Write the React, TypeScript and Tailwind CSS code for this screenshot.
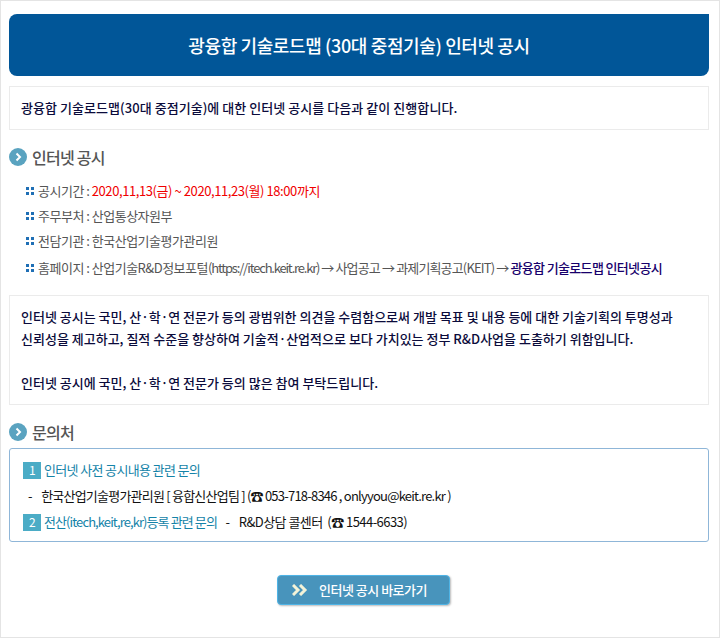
const font = "font-['Noto_Sans_CJK_KR','Noto_Sans',sans-serif]";

function SectionTitle({ children }: { children: string }) {
  return (
    <h3 className="flex items-center gap-[5px] h-[24px]">
      <span className="w-[18px] h-[18px] rounded-full bg-[#5aa3c0] flex items-center justify-center">
        <svg width="10" height="10" viewBox="0 0 10 10" fill="none">
          <path d="M3.5 1.5 L7 5 L3.5 8.5" stroke="#fff" strokeWidth="2" />
        </svg>
      </span>
      <span className="text-[16px] font-medium text-[#555] tracking-[-0.75px]">{children}</span>
    </h3>
  );
}

function Bullet() {
  return (
    <span className="grid grid-cols-2 gap-[2px] w-[8px] shrink-0">
      <i className="w-[3px] h-[3px] bg-[#1f6fb5]" />
      <i className="w-[3px] h-[3px] bg-[#1f6fb5]" />
      <i className="w-[3px] h-[3px] bg-[#1f6fb5]" />
      <i className="w-[3px] h-[3px] bg-[#1f6fb5]" />
    </span>
  );
}

function InfoRow({ className, children }: { className: string; children: React.ReactNode }) {
  return (
    <li className={`flex items-center gap-[4px] ${className}`}>
      <Bullet />
      <span className="whitespace-nowrap">{children}</span>
    </li>
  );
}

function Num({ n }: { n: number }) {
  return (
    <span className="w-[18px] h-[17px] bg-[#4bacc6] text-white text-[12px] leading-[16px] text-center mr-[3px] shrink-0">
      {n}
    </span>
  );
}

export default function App() {
  return (
    <div className={`${font} w-[720px] h-[638px] bg-white border-[1px] border-[#e4e4e4] pt-[13px] pl-[8px] pr-[10px] overflow-hidden`}>
      <h1 className="h-[62px] bg-[#015698] rounded-tl-[8px] rounded-b-[8px] text-white text-[18px] font-medium tracking-[-0.38px] flex items-center justify-center">
        광융합 기술로드맵 (30대 중점기술) 인터넷 공시
      </h1>

      <p className="mt-[10px] h-[44px] border border-[#ebebeb] pl-[11px] flex items-center text-[13px] font-medium text-[#0b0b3b] tracking-[0.05px]">
        광융합 기술로드맵(30대 중점기술)에 대한 인터넷 공시를 다음과 같이 진행합니다.
      </p>

      <div className="mt-[15px]">
        <SectionTitle>인터넷 공시</SectionTitle>
      </div>

      <ul className="mt-[9px] pl-[17px] text-[13px] leading-[20px] text-[#555] tracking-[-0.5px]">
        <InfoRow className="h-[25px]">
          공시기간 : <span className="text-[#f00000] tracking-[-0.42px]">2020,11,13(금) ~ 2020,11,23(월) 18:00까지</span>
        </InfoRow>
        <InfoRow className="h-[25px]">주무부처 : 산업통상자원부</InfoRow>
        <InfoRow className="h-[25px]">전담기관 : 한국산업기술평가관리원</InfoRow>
        <InfoRow className="h-[25px] mt-[2px]">
          홈페이지 : 산업기술R&amp;D정보포털<span className="tracking-[-1.2px]">(https://itech.keit.re.kr)</span>
          <span className="tracking-[-0.85px]"> → 사업공고 → 과제기획공고(KEIT) → </span>
          <span className="text-[#17006b] font-medium tracking-[-0.65px]">광융합 기술로드맵 인터넷공시</span>
        </InfoRow>
      </ul>

      <div className="mt-[15px] h-[110px] border border-[#ebebeb] pl-[11px] pt-[10px] text-[13px] leading-[22px] font-medium text-[#0b0b3b] tracking-[0px]">
        <p>인터넷 공시는 국민, 산·학·연 전문가 등의 광범위한 의견을 수렴함으로써 개발 목표 및 내용 등에 대한 기술기획의 투명성과</p>
        <p>신뢰성을 제고하고, 질적 수준을 향상하여 기술적·산업적으로 보다 가치있는 정부 R&amp;D사업을 도출하기 위함입니다.</p>
        <p className="mt-[22px]">인터넷 공시에 국민, 산·학·연 전문가 등의 많은 참여 부탁드립니다.</p>
      </div>

      <div className="mt-[15px]">
        <SectionTitle>문의처</SectionTitle>
      </div>

      <div className="mt-[4px] h-[94px] border border-[#8fb6d8] rounded-[3px] pl-[13px] pt-[11px] text-[13px] tracking-[-0.65px] text-[#111]">
        <div className="flex items-center h-[20px] text-[#1483a8]">
          <Num n={1} />
          인터넷 사전 공시내용 관련 문의
        </div>
        <div className="h-[24px] mt-[4px] flex items-center pl-[5px] whitespace-pre tracking-[-0.78px]">
          <span>-   </span>
          <span className="ml-[3px]">한국산업기술평가관리원 [ 융합신산업팀 ] (☎ 053-718-8346 , onlyyou@keit.re.kr )</span>
        </div>
        <div className="flex items-center h-[20px] mt-[4px] whitespace-pre">
          <Num n={2} />
          <span className="text-[#1483a8] tracking-[-0.9px]">전산(itech,keit,re,kr)등록 관련 문의</span>
          <span className="ml-[-1px] tracking-[-0.55px]">    -    R&amp;D상담 콜센터  (☎ 1544-6633)</span>
        </div>
      </div>

      <div className="mt-[33px] flex justify-center">
        <button className="w-[173px] h-[30px] ml-[9px] rounded-[4px] border border-[#4fb4e6] bg-[#4894bc] shadow-[1px_1px_2px_#bbb] flex items-center text-white text-[13px] font-medium tracking-[-0.5px] pl-[14px]">
          <svg width="16" height="12" viewBox="0 0 16 12" fill="none" className="mr-[11px]">
            <path d="M1 1 L6 6 L1 11 M8 1 L13 6 L8 11" stroke="#f3f3d8" strokeWidth="3" />
          </svg>
          인터넷 공시 바로가기
        </button>
      </div>
    </div>
  );
}
